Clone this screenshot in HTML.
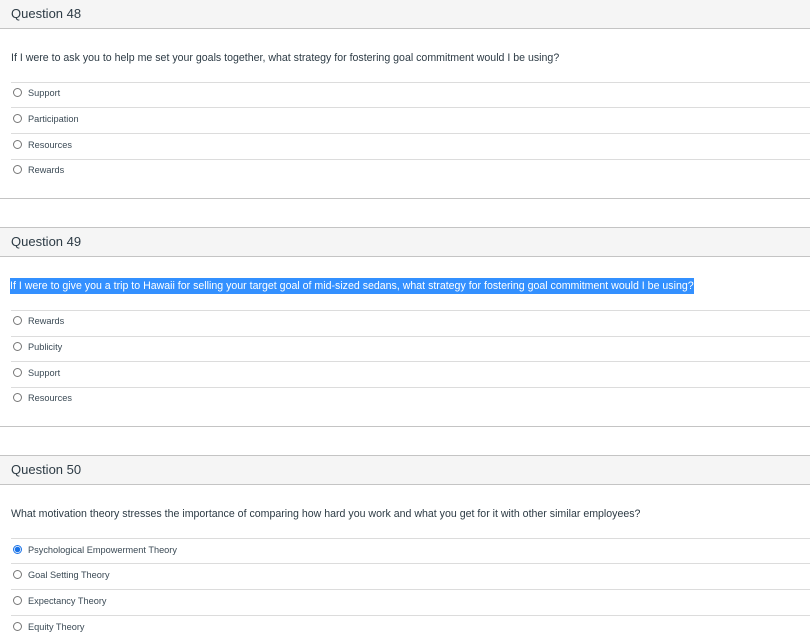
<!DOCTYPE html>
<html><head><meta charset="utf-8"><style>
*{margin:0;padding:0;box-sizing:border-box}
body{width:810px;height:638px;background:#fff;position:relative;overflow:hidden;font-family:"Liberation Sans",sans-serif;color:#2d3b45}
.hd{position:absolute;left:0;width:810px;height:30px;background:#f5f5f5;border-top:1px solid #c4c4c4;border-bottom:1px solid #c4c4c4}
.hd span{position:absolute;left:11px;top:6px;font-size:13px;color:#2d3b45}
.q{position:absolute;left:11px;font-size:10.6px;white-space:nowrap;color:#2d3b45}
.hl{background:#3390ff;color:#fff;padding:2px 0}
.ln{position:absolute;left:11px;width:799px;height:1px;background:#dcdcdc}
.bl{position:absolute;left:0;width:810px;height:1px;background:#c4c4c4}
.o{position:absolute;left:13px;font-size:9.2px;white-space:nowrap;color:#3b4a55}
.o i{display:inline-block;width:9px;height:9px;border:1px solid #777;border-radius:50%;vertical-align:-1px;margin-right:6px;background:#fff}
.o i.on{border-color:#1a73e8;background:radial-gradient(circle,#1a73e8 0 2.5px,#fff 3px)}
</style></head><body>
<div class="hd" style="top:-1px"><span>Question 48</span></div>
<div class="q" style="top:52px">If I were to ask you to help me set your goals together, what strategy for fostering goal commitment would I be using?</div>
<div class="ln" style="top:82px"></div>
<div class="o" style="top:88px"><i></i>Support</div>
<div class="ln" style="top:107px"></div>
<div class="o" style="top:114px"><i></i>Participation</div>
<div class="ln" style="top:133px"></div>
<div class="o" style="top:140px"><i></i>Resources</div>
<div class="ln" style="top:159px"></div>
<div class="o" style="top:165px"><i></i>Rewards</div>
<div class="bl" style="top:198px"></div>

<div class="hd" style="top:227px"><span>Question 49</span></div>
<div class="q" style="top:280px;left:10px"><span class="hl">If I were to give you a trip to Hawaii for selling your target goal of mid-sized sedans, what strategy for fostering goal commitment would I be using?</span></div>
<div class="ln" style="top:310px"></div>
<div class="o" style="top:316px"><i></i>Rewards</div>
<div class="ln" style="top:336px"></div>
<div class="o" style="top:342px"><i></i>Publicity</div>
<div class="ln" style="top:361px"></div>
<div class="o" style="top:368px"><i></i>Support</div>
<div class="ln" style="top:387px"></div>
<div class="o" style="top:393px"><i></i>Resources</div>
<div class="bl" style="top:426px"></div>

<div class="hd" style="top:455px"><span>Question 50</span></div>
<div class="q" style="top:508px">What motivation theory stresses the importance of comparing how hard you work and what you get for it with other similar employees?</div>
<div class="ln" style="top:538px"></div>
<div class="o" style="top:545px"><i class="on"></i>Psychological Empowerment Theory</div>
<div class="ln" style="top:563px"></div>
<div class="o" style="top:570px"><i></i>Goal Setting Theory</div>
<div class="ln" style="top:589px"></div>
<div class="o" style="top:596px"><i></i>Expectancy Theory</div>
<div class="ln" style="top:615px"></div>
<div class="o" style="top:622px"><i></i>Equity Theory</div>
</body></html>
